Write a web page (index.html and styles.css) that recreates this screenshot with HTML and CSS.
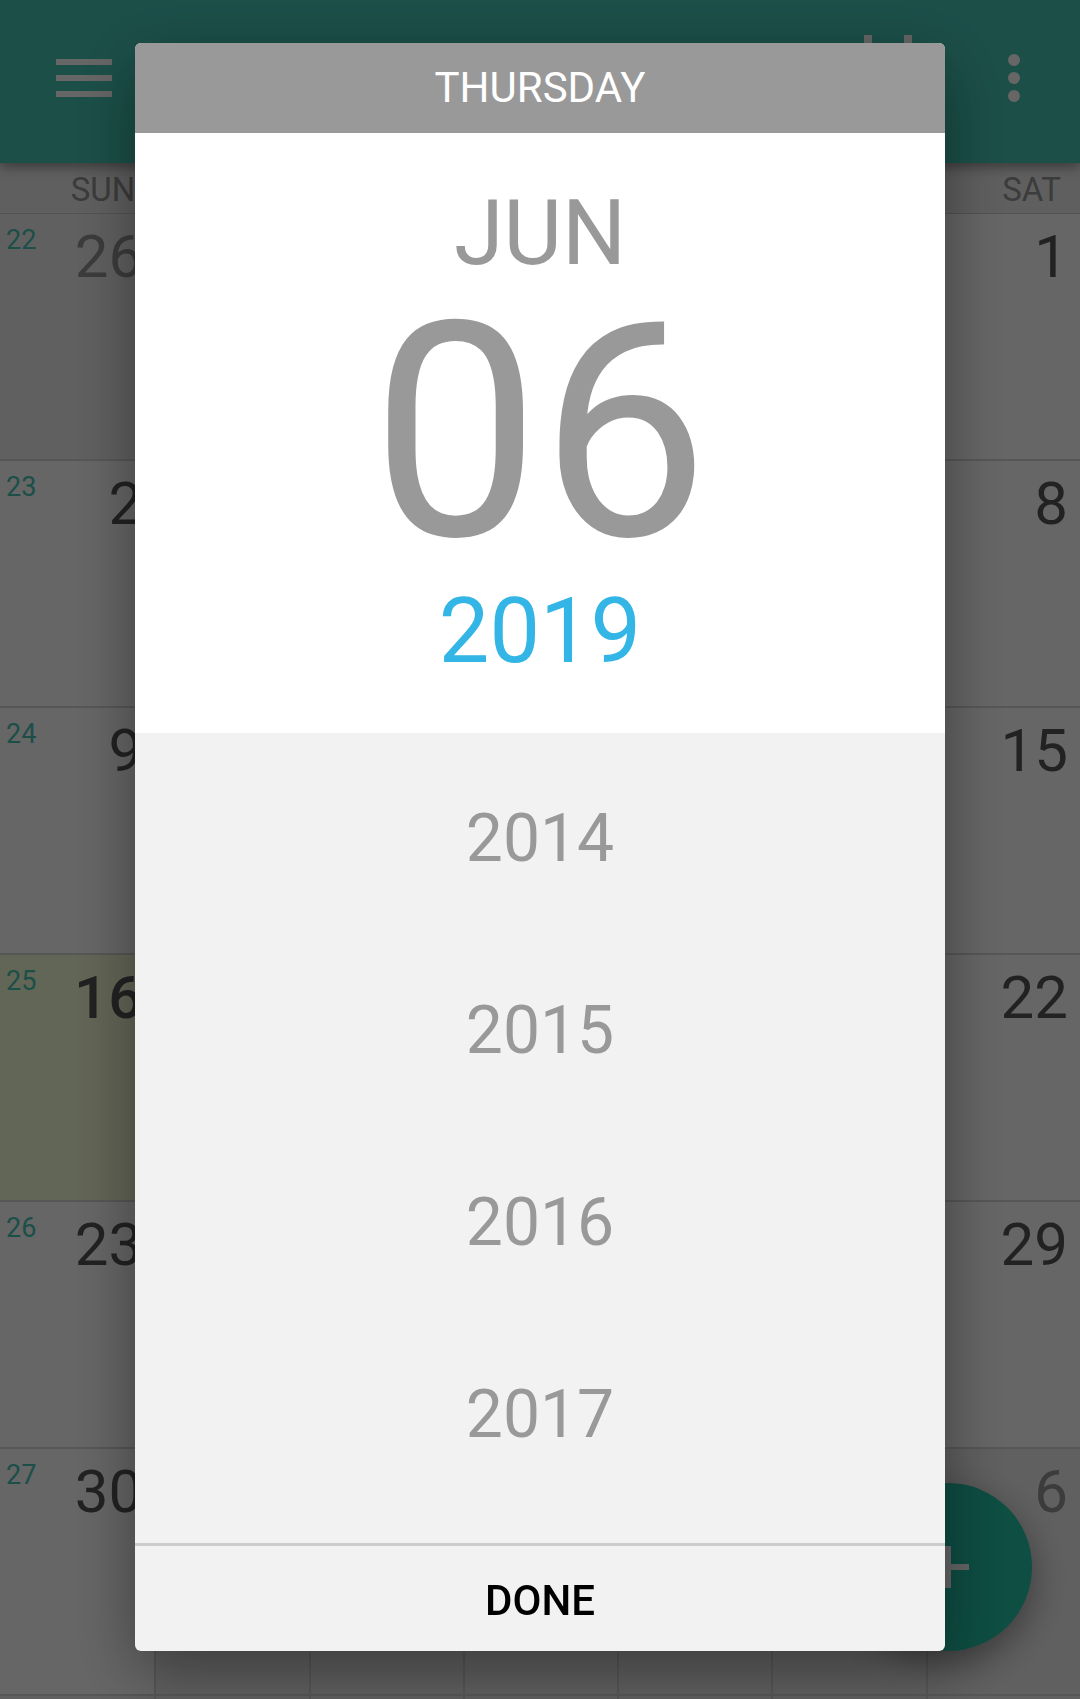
FILE: index.html
```html
<!DOCTYPE html>
<html lang="en">
<head>
<meta charset="utf-8">
<meta name="viewport" content="width=device-width, initial-scale=1">
<title>Calendar</title>
<link rel="stylesheet" href="styles.css">
</head>
<body>
<div class="app">
  <header class="toolbar">
    <button class="icon-button" type="button" aria-label="Menu">
      <svg width="56" height="38" viewBox="0 0 56 38" fill="currentColor"><path d="M0 0h56v6H0zM0 16h56v6H0zM0 32h56v6H0z"/></svg>
    </button>
    <div class="toolbar-actions">
      <button class="icon-button" type="button" aria-label="Today">
        <svg width="72" height="86" viewBox="0 0 72 86" fill="currentColor"><path fill-rule="evenodd" d="M12 0h8v8h32V0h8v8h4q8 0 8 8v62q0 8-8 8H8q-8 0-8-8V16q0-8 8-8h4zM8 28v50h56V28z"/></svg>
      </button>
      <button class="icon-button" type="button" aria-label="More options">
        <svg width="12" height="48" viewBox="0 0 12 48" fill="currentColor"><circle cx="6" cy="6" r="6"/><circle cx="6" cy="24" r="6"/><circle cx="6" cy="42" r="6"/></svg>
      </button>
    </div>
  </header>
  <table class="month">
    <thead>
      <tr><th scope="col">SUN</th><td></td><td></td><td></td><td></td><td></td><th scope="col">SAT</th></tr>
    </thead>
    <tbody>
      <tr><td class="outside"><div class="day"><span class="week">22</span><span>26</span></div></td><td class="outside"></td><td class="outside"></td><td class="outside"></td><td class="outside"></td><td class="outside"></td><td><div class="day"><span>1</span></div></td></tr>
      <tr><td><div class="day"><span class="week">23</span><span>2</span></div></td><td></td><td></td><td></td><td></td><td></td><td><div class="day"><span>8</span></div></td></tr>
      <tr><td><div class="day"><span class="week">24</span><span>9</span></div></td><td></td><td></td><td></td><td></td><td></td><td><div class="day"><span>15</span></div></td></tr>
      <tr><td class="today"><div class="day"><span class="week">25</span><span>16</span></div></td><td></td><td></td><td></td><td></td><td></td><td><div class="day"><span>22</span></div></td></tr>
      <tr><td><div class="day"><span class="week">26</span><span>23</span></div></td><td></td><td></td><td></td><td></td><td></td><td><div class="day"><span>29</span></div></td></tr>
      <tr><td><div class="day"><span class="week">27</span><span>30</span></div></td><td class="outside"></td><td class="outside"></td><td class="outside"></td><td class="outside"></td><td class="outside"></td><td class="outside"><div class="day"><span>6</span></div></td></tr>
      <tr><td class="outside"></td><td class="outside"></td><td class="outside"></td><td class="outside"></td><td class="outside"></td><td class="outside"></td><td class="outside"></td></tr>
    </tbody>
  </table>
  <button class="fab" type="button" aria-label="Add event">
    <svg width="42" height="42" viewBox="0 0 42 42" fill="currentColor"><path d="M18 0h6v18h18v6H24v18h-6V24H0v-6h18z"/></svg>
  </button>
</div>

<div class="scrim">
  <section class="picker" role="dialog" aria-modal="true" aria-label="Choose a date">
    <h1 class="picker-weekday">THURSDAY</h1>
    <div class="picker-date">
      <button class="date-part" type="button">JUN</button>
      <button class="date-part date-day" type="button">06</button>
      <button class="date-part date-active" type="button">2019</button>
    </div>
    <div class="years">
      <button class="year" type="button">2014</button>
      <button class="year" type="button">2015</button>
      <button class="year" type="button">2016</button>
      <button class="year" type="button">2017</button>
    </div>
    <button class="done" type="button">DONE</button>
  </section>
</div>
</body>
</html>
```

FILE: styles.css
```css
* {
  box-sizing: border-box;
}

body {
  margin: 0;
  font-family: Roboto, "Liberation Sans", sans-serif;
  background: #fff;
}

button {
  margin: 0;
  padding: 0;
  border: 0;
  background: none;
  font: inherit;
  color: inherit;
  cursor: pointer;
}

svg {
  display: block;
}

/* Month view */
.app {
  display: flex;
  flex-direction: column;
  height: 100vh;
  overflow: hidden;
}

.toolbar {
  z-index: 1;
  display: flex;
  flex: none;
  justify-content: space-between;
  align-items: center;
  height: 163px;
  padding: 0 60px 7px 56px;
  background: #46c6b5;
  color: #fff;
  box-shadow: 0 4px 12px rgba(0, 0, 0, 0.4);
}

.toolbar-actions {
  display: flex;
  align-items: center;
  gap: 84px;
}

.month {
  flex: none;
  width: 100%;
  table-layout: fixed;
  border-collapse: separate;
  border-spacing: 0;
}

.month thead th,
.month thead td {
  height: 51px;
  padding: 4px 19px 0 0;
  border-bottom: 1px solid #cfcfcf;
  background: #eee;
  color: #969696;
  font-size: 33px;
  font-weight: 400;
  line-height: 40px;
  text-align: right;
}

.month tbody td {
  height: 247px;
  padding: 0;
  border-left: 2px solid #d8d8d8;
  border-bottom: 2px solid #d8d8d8;
  color: #555;
  font-size: 60px;
  line-height: 70px;
  vertical-align: top;
}

.month tbody td:first-child {
  border-left: 0;
}

.month tbody .outside {
  background: #f0f0f0;
  color: #969696;
}

.month tbody .today {
  background: #f6ffd6;
  font-weight: 500;
}

.day {
  display: flex;
  justify-content: flex-end;
  padding: 8px 12px 0 6px;
}

.week {
  margin-right: auto;
  padding-top: 2px;
  color: #46c6b5;
  font-size: 27px;
  font-weight: 400;
  line-height: 32px;
}

.fab {
  position: fixed;
  right: 48px;
  bottom: 48px;
  display: grid;
  place-items: center;
  width: 168px;
  height: 168px;
  border-radius: 50%;
  background: #23c2a7;
  color: #fff;
  box-shadow: 0 12px 36px rgba(0, 0, 0, 0.4);
}

/* Date picker */
.scrim {
  position: fixed;
  inset: 0;
  z-index: 2;
  display: flex;
  justify-content: center;
  padding: 43px 0 48px;
  background: rgba(0, 0, 0, 0.6);
}

.picker {
  display: flex;
  flex-direction: column;
  width: 75%;
  overflow: hidden;
  border-radius: 6px;
  background: #f2f2f2;
  color: #999;
  box-shadow: 0 20px 64px rgba(0, 0, 0, 0.4);
}

.picker-weekday {
  flex: none;
  margin: 0;
  background: #999;
  color: #fff;
  font-size: 42px;
  font-weight: 400;
  line-height: 90px;
  text-align: center;
}

.picker-date {
  display: flex;
  flex: none;
  flex-direction: column;
  align-items: center;
  padding: 42px 0;
  background: #fff;
}

.date-part {
  font-size: 90px;
  line-height: 118px;
}

.date-day {
  font-size: 300px;
  line-height: 280px;
}

.date-active {
  color: #33b5e5;
}

.years {
  display: flex;
  flex: 1;
  flex-direction: column;
  min-height: 0;
  padding-top: 10px;
  overflow: hidden;
}

.year {
  flex: none;
  font-size: 66px;
  line-height: 192px;
}

.done {
  flex: none;
  padding-top: 4px;
  border-top: 3px solid #ccc;
  color: #000;
  font-size: 42px;
  font-weight: 500;
  line-height: 101px;
}
```
